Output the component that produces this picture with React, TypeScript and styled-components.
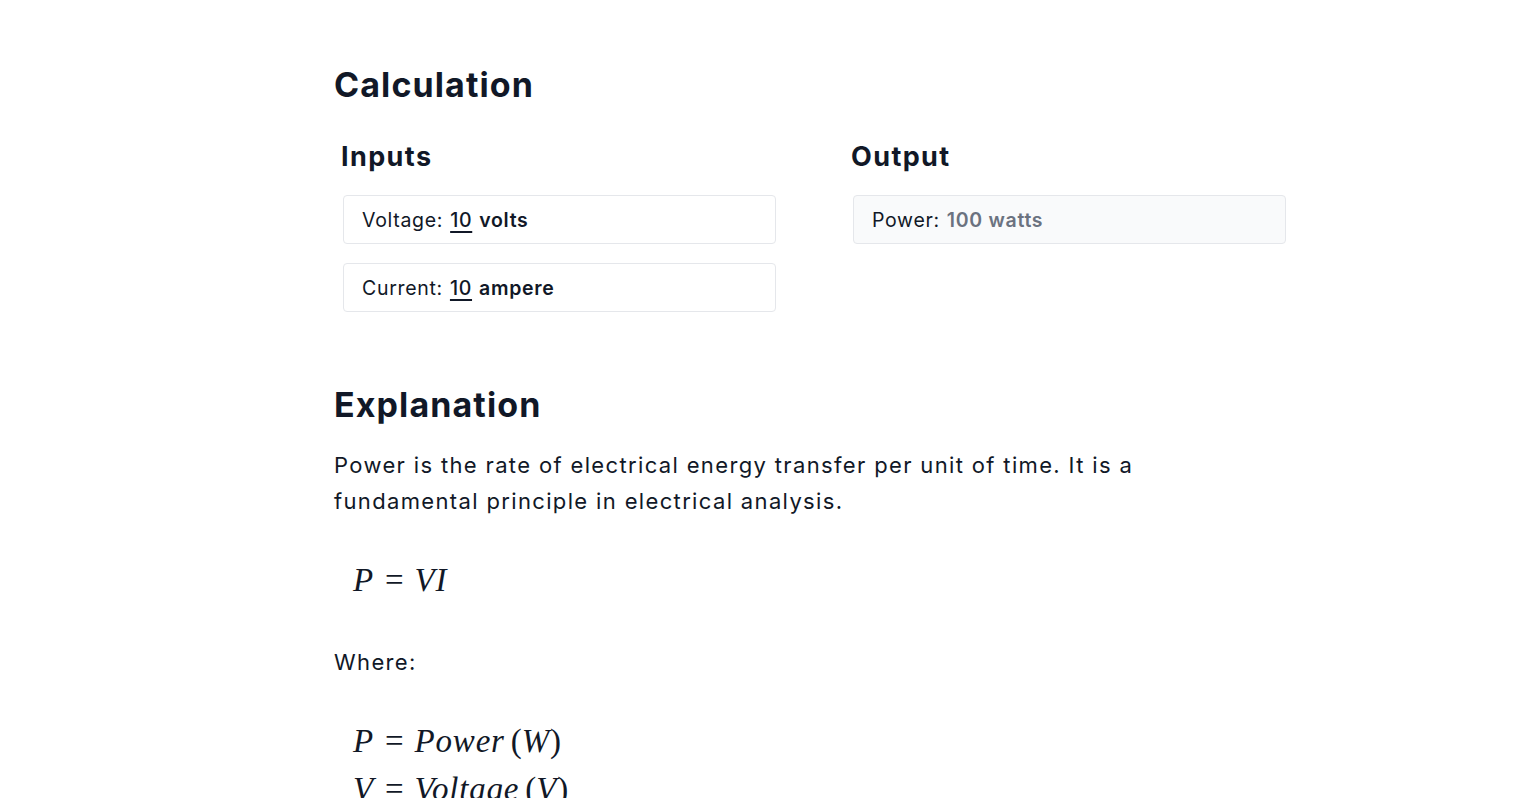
import React from "react";
import styled, { createGlobalStyle } from "styled-components";

const Global = createGlobalStyle`
  html, body { margin: 0; padding: 0; background: #ffffff; }
  body { font-family: Inter, "Noto Sans", sans-serif; color: #111827; }
`;

const Page = styled.main`
  width: 852px;
  margin: 0 auto;
  padding-top: 63px;
  display: flex;
  flex-direction: column;
`;

const H2 = styled.h2<{ $top?: number }>`
  margin: ${(p) => p.$top ?? 0}px 0 0 0;
  font-size: 34px;
  line-height: 44px;
  font-weight: 700;
  color: #111827;
  letter-spacing: 1.1px;
`;

const Grid = styled.section`
  display: grid;
  grid-template-columns: 510px 510px;
  margin: 32px 0 0 7px;
`;

const Column = styled.div`
  display: flex;
  flex-direction: column;
`;

const H3 = styled.h3`
  margin: 0 0 20px 0;
  font-size: 27px;
  line-height: 36px;
  font-weight: 700;
  color: #111827;
  letter-spacing: 1.4px;
`;

const Field = styled.div<{ $muted?: boolean }>`
  width: 433px;
  height: 49px;
  box-sizing: border-box;
  margin: 0 0 19px 2px;
  padding: 0 18px;
  display: flex;
  align-items: center;
  border: 1px solid #e5e7eb;
  border-radius: 4px;
  background: ${(p) => (p.$muted ? "#f9fafb" : "#ffffff")};
  font-size: 19.5px;
  letter-spacing: 0.7px;
  color: #111827;
`;

const Value = styled.span<{ $muted?: boolean }>`
  font-weight: 600;
  margin-left: 7px;
  color: ${(p) => (p.$muted ? "#6b7280" : "#111827")};
`;

const Num = styled.span`
  text-decoration: underline;
  text-underline-offset: 4px;
  text-decoration-thickness: 1.5px;
  font-weight: 500;
  margin-right: 7px;
`;

const Para = styled.p<{ $top?: number }>`
  margin: ${(p) => p.$top ?? 0}px 0 0 0;
  font-size: 22px;
  line-height: 36px;
  letter-spacing: 1.35px;
  color: #111827;
  max-width: 830px;
`;

const MathBlock = styled.div<{ $top?: number }>`
  margin: ${(p) => p.$top ?? 0}px 0 0 19px;
  font-family: "Liberation Serif", "DejaVu Serif", serif;
  font-size: 33px;
  line-height: 48px;
  color: #111827;
  white-space: nowrap;
`;

const I = styled.i`
  font-style: italic;
  letter-spacing: 0.8px;
`;

const Op = styled.span`
  margin: 0 11px;
  font-style: normal;
`;

const Paren = styled.span`
  font-style: normal;
  margin-left: 6px;
`;

export default function App() {
  return (
    <>
      <Global />
      <Page>
        <H2>Calculation</H2>
        <Grid>
          <Column>
            <H3>Inputs</H3>
            <Field>
              Voltage:
              <Value>
                <Num>10</Num>volts
              </Value>
            </Field>
            <Field>
              Current:
              <Value>
                <Num>10</Num>ampere
              </Value>
            </Field>
          </Column>
          <Column>
            <H3>Output</H3>
            <Field $muted>
              Power:
              <Value $muted>100 watts</Value>
            </Field>
          </Column>
        </Grid>
        <H2 $top={52}>Explanation</H2>
        <Para $top={20}>
          Power is the rate of electrical energy transfer per unit of time. It is a fundamental
          principle in electrical analysis.
        </Para>
        <MathBlock $top={37}>
          <I>P</I>
          <Op>=</Op>
          <I>VI</I>
        </MathBlock>
        <Para $top={40}>Where:</Para>
        <MathBlock $top={37}>
          <I>P</I>
          <Op>=</Op>
          <I>Power</I>
          <Paren>(</Paren>
          <I>W</I>
          <span>)</span>
        </MathBlock>
        <MathBlock $top={0}>
          <I>V</I>
          <Op>=</Op>
          <I>Voltage</I>
          <Paren>(</Paren>
          <I>V</I>
          <span>)</span>
        </MathBlock>
      </Page>
    </>
  );
}
